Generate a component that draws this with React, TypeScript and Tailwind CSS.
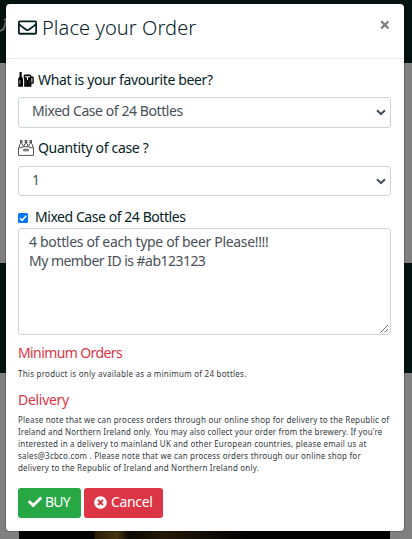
import React from "react";
import { FaRegEnvelope, FaCheck, FaTimesCircle } from "react-icons/fa";

function BeerIcon() {
  return (
    <svg width="16" height="16" viewBox="0 0 16 16" className="shrink-0" fill="#000">
      <path d="M1.500 0h2.200v4.200c0 .9 1.300 1.500 1.300 3V14.800H.2V7.200c0-1.500 1.300-2.100 1.300-3z" />
      <path d="M1.200 8.200h1.300v3.600H1.200z" fill="#888" />
      <path d="M5.800 3.600c.3-1.100 1.600-1.300 2.700-.9 1-.6 2.500-.5 3.100.1 1 0 1.800.5 1.800 1.600h.9c1 0 1.500.6 1.500 1.500v4.400c0 1-.6 1.500-1.500 1.500h-.9v3H6.200V6.400c-.5-.6-.8-1.700-.4-2.800z" />
      <path d="M6.900 4.700h5.200M9.500 4.700v3.200" stroke="#fff" strokeWidth="1.100" />
      <path d="M8 8.200v4.500M11.200 8.200v4.500" stroke="#555" strokeWidth=".7" />
      <path d="M13.400 6h1v4.400h-1z" fill="#fff" />
    </svg>
  );
}

function CaseIcon() {
  return (
    <svg width="16" height="16" viewBox="0 0 16 16" className="shrink-0" fill="none" stroke="#444" strokeWidth=".9">
      <path d="M2 .6h2.400M6.800 .6h2.400M11.600 .6H14M2 2.500h2.400M6.800 2.500h2.400M11.600 2.500H14" />
      <path d="M2.500 .5v3L1.400 5v2.500M3.900 .5v3L5 5v2.200M7.300 .5v3L6.200 5v1.600M8.700 .5v3L9.800 5v1.600M12.100 .5v3L11 5v2.200M13.500 .5v3L14.600 5v2.500" />
      <path d="M.5 15.400V7.700h3.800l1-1h5.400l1 1h3.800v7.700zM5.700 9.300h4.600v1.500H5.700z" />
    </svg>
  );
}

function Chevron() {
  return (
    <svg width="10" height="7" viewBox="0 0 10 7" fill="none" stroke="#495057" strokeWidth="2">
      <path d="M1 1.200 5 5l4-3.800" />
    </svg>
  );
}

function Select({ children, className }: { children: React.ReactNode; className: string }) {
  return (
    <div className={"flex items-center justify-between rounded-[3px] border border-[#ced4da] pr-[4px] pl-[13px] text-[#495057] " + className}>
      {children}
      <Chevron />
    </div>
  );
}

export default function App() {
  return (
    <div className="relative h-[539px] w-[412px] overflow-hidden bg-[#808080] font-['Noto_Sans',sans-serif] text-[14px] leading-[20px] text-[#04231f]">
      <div className="h-[63px] bg-[#02120e]">
        <svg width="8" height="34" viewBox="0 0 8 34" fill="none" stroke="#777" strokeWidth="1.500">
          <path d="M0 31q4-1 5-6t3-6M4 20l2-1" />
        </svg>
      </div>
      <div className="h-[200px]" />
      <div className="h-[110px] bg-[#02120e]" />
      <div className="mt-[151px] mr-[22px] ml-[19px] h-[15px] bg-[linear-gradient(90deg,#000_0_75px,#2b1b08_76px,#483411_98px,#0b0905_110px,#241806_145px,#100c08_190px,#000_230px)]" />

      <main className="absolute top-[4px] left-[6px] flex h-[527px] w-[398px] flex-col rounded-[4px] bg-white shadow-[0_0_0_1px_rgba(0,0,0,0.2)]">
        <header className="flex h-[55px] items-start justify-between border-b border-[#e9ecef] pt-[10px] pr-[14px] pl-[12px]">
          <h1 className="flex items-center text-[20px] leading-[28px]">
            <FaRegEnvelope size={19} className="-mt-px mr-[5px]" />
            <span className="font-light tracking-[0.09px] whitespace-nowrap">Place your Order</span>
          </h1>
          <svg width="10" height="10" viewBox="0 0 10 10" className="mt-[6px]" fill="none" stroke="#7f7f7f" strokeWidth="2.300">
            <path d="m1.200 1.200 7.200 7.200m0-7.200-7.200 7.200" />
          </svg>
        </header>

        <section className="flex flex-col pt-[11px] pr-[13px] pl-[12px]">
          <label className="flex h-[20px] items-center gap-[4px] whitespace-nowrap">
            <BeerIcon />
            <span className="tracking-[-0.37px]">What is your favourite beer?</span>
          </label>
          <Select className="mt-[7px] h-[31px]"><span className="-mt-[3px] tracking-[-0.43px]">Mixed Case of 24 Bottles</span></Select>
          <label className="mt-[10px] flex h-[20px] items-center gap-[4px] whitespace-nowrap">
            <CaseIcon />
            <span className="tracking-[-0.33px]">Quantity of case ?</span>
          </label>
          <Select className="mt-[8px] h-[30px]"><span className="-mt-[3px]">1</span></Select>
          <label className="mt-[11px] flex h-[20px] items-center gap-[7px]">
            <svg width="10" height="10" viewBox="0 0 10 10" className="mt-px">
              <rect width="10" height="10" rx="1.500" fill="#0075ff" />
              <path d="m2 5.200 2.100 2.100L8.200 2.800" stroke="#fff" strokeWidth="1.500" fill="none" />
            </svg>
            <span className="tracking-[-0.44px]">Mixed Case of 24 Bottles</span>
          </label>
          <div className="mt-px flex h-[107px] justify-between rounded-[3px] border border-[#ced4da] pt-[3px] pl-[10px] text-[#495057]">
            <p className="leading-[19px] whitespace-nowrap">
              <span className="tracking-[-0.33px]">4 bottles of each type of beer Please!!!!</span><br />
              <span className="tracking-[-0.53px]">My member ID is #ab123123</span>
            </p>
            <svg width="10" height="10" viewBox="0 0 10 10" className="self-end" stroke="#555" strokeWidth=".9">
              <path d="m.5 8.500 7.500-7.500M4.500 8.500l3.500-3.500" />
            </svg>
          </div>
          <h2 className="mt-[8px] h-[20px] text-[#dc3545]"><span className="tracking-[-0.6px]">Minimum Orders</span></h2>
          <p className="mt-[5px] h-[12px] text-[8px] leading-[12px] whitespace-nowrap text-[#343a40]"><span className="tracking-[0.24px]">This product is only available as a minimum of 24 bottles.</span></p>
          <h2 className="mt-[10px] h-[20px] text-[#dc3545]"><span className="tracking-[-0.3px]">Delivery</span></h2>
          <p className="mt-[4px] text-[8px] leading-[12px] whitespace-nowrap text-[#343a40]">
            <span className="tracking-[0.19px]">Please note that we can process orders through our online shop for delivery to the Republic of</span><br />
            <span className="tracking-[0.15px]">Ireland and Northern Ireland only. You may also collect your order from the brewery. If you're</span><br />
            <span className="tracking-[0.19px]">interested in a delivery to mainland UK and other European countries, please email us at</span><br />
            <span className="tracking-[0.2px]">sales@3cbco.com . Please note that we can process orders through our online shop for</span><br />
            <span className="tracking-[0.2px]">delivery to the Republic of Ireland and Northern Ireland only.</span>
          </p>
          <div className="mt-[14px] flex gap-[3px] text-white">
            <button className="flex h-[30px] w-[63px] items-center gap-[3px] rounded-[3px] bg-[#28a745] pl-[10px]"><FaCheck size={14} className="-mt-[2px]" /><span className="-mt-[2px] tracking-[-0.8px]">BUY</span></button>
            <button className="flex h-[30px] w-[79px] items-center gap-[4px] rounded-[3px] bg-[#dc3545] pl-[10px]"><FaTimesCircle size={13} className="-mt-[2px]" /><span className="-mt-[2px] tracking-[-0.35px]">Cancel</span></button>
          </div>
        </section>
      </main>
    </div>
  );
}
